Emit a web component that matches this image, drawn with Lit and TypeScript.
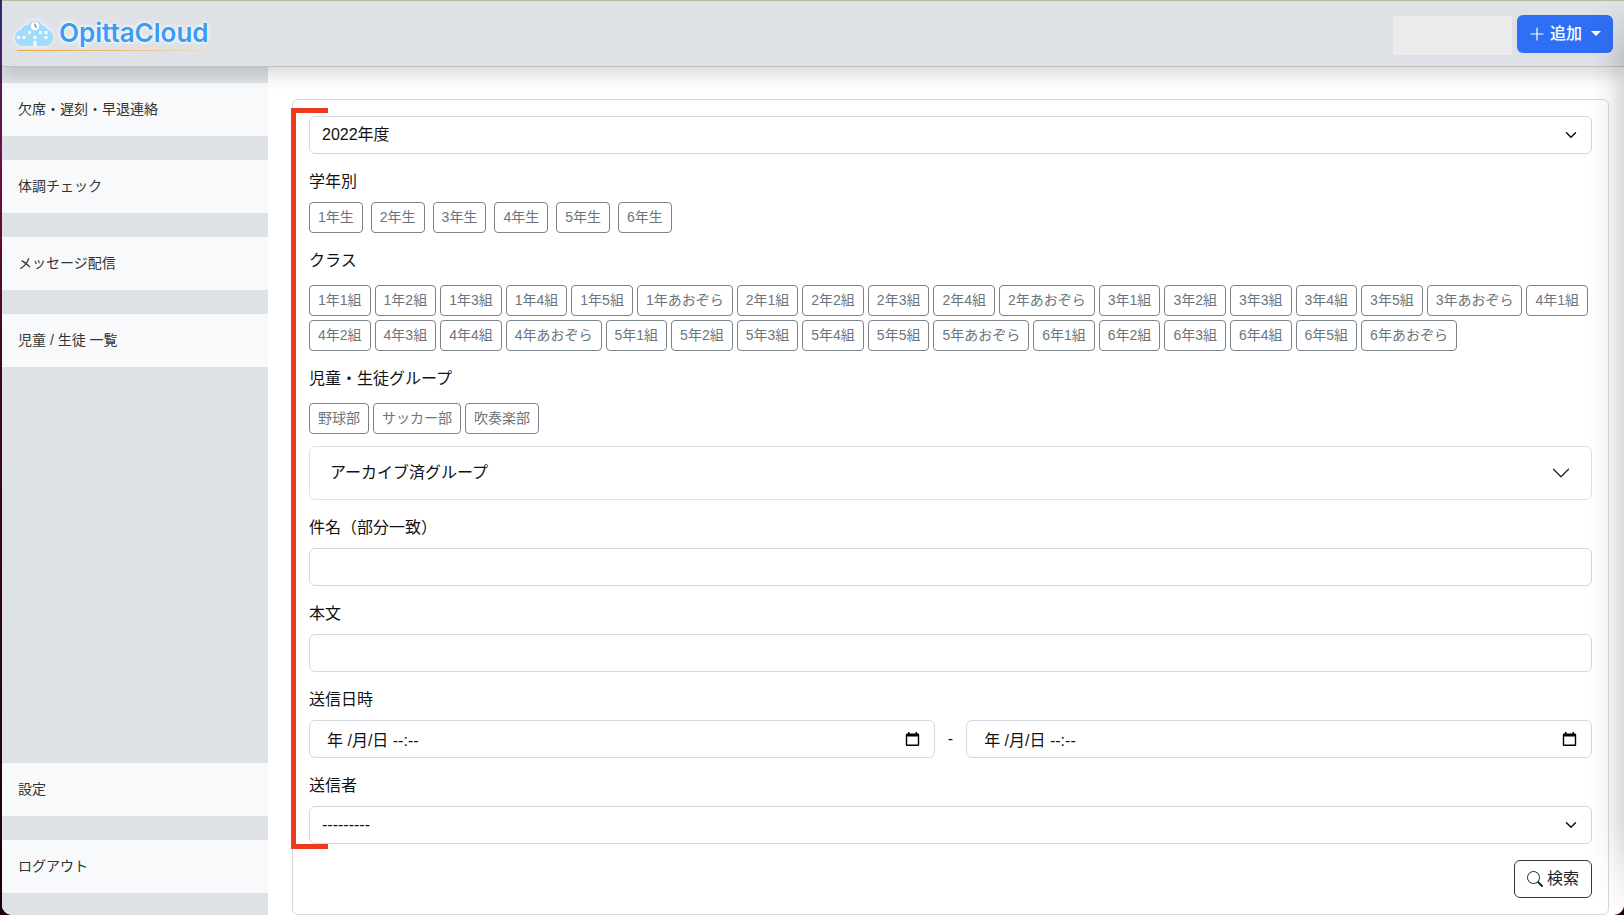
import { LitElement, html, css, svg } from "lit";
import { customElement, property, state } from "lit/decorators.js";
import { classMap } from "lit/directives/class-map.js";

const MENU_TOP = ["欠席・遅刻・早退連絡", "体調チェック", "メッセージ配信", "児童 / 生徒 一覧"];
const MENU_BOTTOM = ["設定", "ログアウト"];

const GRADES = [1, 2, 3, 4, 5, 6].map((n) => `${n}年生`);
const CLASS_COUNTS = [5, 4, 5, 4, 5, 5];
const CLASSES = CLASS_COUNTS.flatMap((count, i) => [
  ...Array.from({ length: count }, (_, k) => `${i + 1}年${k + 1}組`),
  `${i + 1}年あおぞら`,
]);
const GROUPS = ["野球部", "サッカー部", "吹奏楽部"];

const chevron = svg`<path d="m2 5 6 6 6-6" fill="none" stroke="currentColor" stroke-width="2" stroke-linecap="round" stroke-linejoin="round"/>`;

@customElement("brand-logo")
class BrandLogo extends LitElement {
  static styles = css`
    :host {
      display: block;
    }
    .logo {
      display: flex;
      align-items: center;
      gap: 5px;
      height: 34px;
      color: #3a9cf5;
      font: 600 26px/34px Inter, sans-serif;
      text-decoration: none;
      text-shadow: 0 0 3px #fff, 0 0 5px #fff;
    }
    .cloud {
      width: 40px;
      height: 28px;
      filter: drop-shadow(0 0 2px #fff);
    }
    .line {
      height: 1px;
      margin-left: 3px;
      background: linear-gradient(90deg, #f0a43c, #f0b566 45%, #ecdcc4);
    }
  `;
  render() {
    return html`
      <a class="logo" href="#">
        <svg class="cloud" viewBox="0 0 40 28" aria-hidden="true">
          <path
            d="M9 27a8.500 8.500 0 0 1-1.500-16.800A7 7 0 0 1 14 6a8 8 0 0 1 14 0 7 7 0 0 1 5 4.200A8.600 8.600 0 0 1 31.500 27z"
            fill="#a0dcfb"
          />
          <circle cx="21" cy="7" r="4.200" fill="#fff" />
          <path d="M21 4.500V7.300l1.800 1" fill="none" stroke="#555" stroke-width="1" />
          <g fill="#fff">
            <rect x="3" y="17" width="3" height="3" rx="1" />
            <rect x="8.500" y="17" width="3" height="3" rx="1" />
            <rect x="14" y="12" width="3" height="3" rx="1" />
            <rect x="19.500" y="17" width="3" height="3" rx="1" />
            <rect x="25" y="12" width="3" height="3" rx="1" />
            <rect x="30.500" y="12" width="3" height="3" rx="1" />
            <rect x="30.500" y="17" width="3" height="3" rx="1" />
            <rect x="19.500" y="22" width="3" height="5" />
          </g>
        </svg>
        OpittaCloud
      </a>
      <div class="line"></div>
    `;
  }
}

@customElement("chip-group")
class ChipGroup extends LitElement {
  @property() label = "";
  @property({ attribute: false }) items: string[] = [];
  @property({ type: Boolean }) roomy = false;
  @state() private selected = new Set<string>();

  static styles = css`
    :host {
      display: block;
    }
    .group {
      display: flex;
      flex-direction: column;
      gap: 12px;
    }
    .group.roomy {
      gap: 8px;
    }
    .title {
      line-height: 24px;
    }
    .chips {
      display: flex;
      flex-wrap: wrap;
      gap: 4px;
    }
    .roomy .chips {
      gap: 8px;
    }
    .chip {
      padding: 4px 8px;
      border: 1px solid #7b838a;
      border-radius: 4px;
      background: transparent;
      color: #6c757d;
      font: inherit;
      font-size: 14px;
      line-height: 21px;
      cursor: pointer;
    }
    .chip.on {
      background: #6c757d;
      color: #fff;
    }
  `;

  private toggle(item: string) {
    const next = new Set(this.selected);
    if (!next.delete(item)) next.add(item);
    this.selected = next;
  }

  render() {
    return html`
      <div class=${classMap({ group: true, roomy: this.roomy })} role="group" aria-labelledby="title">
        <div class="title" id="title">${this.label}</div>
        <div class="chips">
          ${this.items.map(
            (item) => html`<button
              type="button"
              class=${classMap({ chip: true, on: this.selected.has(item) })}
              aria-pressed=${this.selected.has(item)}
              @click=${() => this.toggle(item)}
            >${item}</button>`
          )}
        </div>
      </div>
    `;
  }
}

@customElement("app-root")
class AppRoot extends LitElement {
  static styles = css`
    :host {
      display: block;
      color: #111;
      font: 16px/24px "Liberation Sans", "Noto Sans CJK JP", sans-serif;
    }
    *,
    *::before,
    *::after {
      box-sizing: border-box;
    }
    .desktop {
      padding: 1px 0 0 2px;
      background: linear-gradient(#2b2a6c, #6d0f45 160px, #3c0618 380px, #1c0207);
    }
    .window {
      position: relative;
      display: flex;
      flex-direction: column;
      min-height: calc(100vh - 1px);
      overflow: hidden;
      border-radius: 0 0 10px 10px;
      background: #fff;
      box-shadow: 0 -1px 0 #afbea0;
    }
    .edge {
      position: absolute;
      inset: 0 0 0 auto;
      width: 36px;
      background: linear-gradient(90deg, transparent, rgba(0, 0, 0, 0.03) 50%, rgba(0, 0, 0, 0.14));
      mask-image: linear-gradient(transparent, #000 60px, #000 calc(100% - 90px), transparent);
      pointer-events: none;
      z-index: 3;
    }
    .header {
      position: relative;
      z-index: 2;
      display: flex;
      align-items: center;
      justify-content: space-between;
      height: 66px;
      padding: 0 11px 0 12px;
      border-bottom: 1px solid #bfc3c7;
      background: #dee2e6;
      box-shadow: 0 8px 16px rgba(0, 0, 0, 0.15);
    }
    .actions {
      display: flex;
      align-items: center;
      gap: 5px;
    }
    .account {
      width: 119px;
      height: 39px;
      margin-top: 4px;
      background: #ebebeb;
    }
    .add {
      display: flex;
      align-items: center;
      gap: 5px;
      height: 38px;
      padding: 0 12px;
      border: 0;
      border-radius: 6px;
      background: #2f6ff5;
      color: #fff;
      font: inherit;
      font-weight: 500;
      cursor: pointer;
    }
    .caret {
      margin-left: 4px;
      border: 5px solid transparent;
      border-top-color: #fff;
      border-bottom: 0;
    }
    .body {
      flex: 1;
      display: grid;
      grid-template-columns: 266px minmax(0, 1fr);
    }
    .sidebar {
      display: flex;
      flex-direction: column;
      gap: 24px;
      padding: 16px 0 22px;
      background: #dee2e6;
    }
    .item {
      padding: 16px;
      background: #f8f9fb;
      color: #333;
      font-size: 14px;
      line-height: 21px;
      text-decoration: none;
    }
    .first-bottom {
      margin-top: auto;
    }
    .main {
      padding: 32px 15px 0 24px;
    }
    .card {
      position: relative;
      display: flex;
      flex-direction: column;
      gap: 16px;
      padding: 16px;
      border: 1px solid #d5d8db;
      border-radius: 6px;
    }
    .bracket {
      position: absolute;
      top: 8px;
      bottom: 65px;
      left: -2px;
      width: 37px;
      border: 5px solid #ee3a1f;
      border-right: 0;
      pointer-events: none;
      z-index: 1;
    }
    .groups,
    .field {
      display: flex;
      flex-direction: column;
    }
    .groups {
      gap: 12px;
    }
    .field {
      gap: 8px;
    }
    .control {
      width: 100%;
      min-width: 0;
      height: 38px;
      padding: 0 12px;
      border: 1px solid #d3d8de;
      border-radius: 6px;
      background: transparent;
      color: inherit;
      font: inherit;
      appearance: none;
    }
    .stack {
      display: grid;
      flex: 1;
      align-items: center;
    }
    .stack > * {
      grid-area: 1 / 1;
    }
    .arrow {
      justify-self: end;
      margin-right: 13px;
      pointer-events: none;
    }
    .range {
      display: flex;
      align-items: center;
      gap: 13px;
    }
    .date {
      padding-left: 17px;
    }
    .picker {
      display: flex;
      justify-self: end;
      margin-right: 15px;
      padding: 0;
      border: 0;
      background: none;
      color: #000;
      cursor: pointer;
    }
    .accordion {
      display: flex;
      align-items: center;
      justify-content: space-between;
      height: 54px;
      padding: 0 20px;
      border: 1px solid #dee2e6;
      border-radius: 6px;
      background: transparent;
      color: inherit;
      font: inherit;
      cursor: pointer;
    }
    .search {
      display: flex;
      align-items: center;
      align-self: flex-end;
      gap: 4px;
      height: 38px;
      padding: 0 12px;
      border: 1px solid #33373b;
      border-radius: 6px;
      background: transparent;
      color: #212529;
      font: inherit;
      cursor: pointer;
    }
  `;

  private select(id: string, option: string, label?: string) {
    return html`<div class="stack">
      <select class="control" id=${id} aria-label=${label ?? "送信者"}>
        <option>${option}</option>
      </select>
      <svg class="arrow" width="16" height="12" viewBox="0 0 16 16" aria-hidden="true">${chevron}</svg>
    </div>`;
  }

  private textField(id: string, label: string) {
    return html`<div class="field">
      <label for=${id}>${label}</label>
      <input class="control" id=${id} type="text" />
    </div>`;
  }

  private dateInput(id: string, label: string) {
    return html`<div class="stack">
      <input class="control date" id=${id} type="text" aria-label=${label} value="年 /月/日 --:--" />
      <button class="picker" type="button" aria-label="カレンダー">
        <svg width="15" height="15" viewBox="0 0 15 15" aria-hidden="true">
          <path d="M3 0h1.500v1.500h6V0H12v1.500h1A1.200 1.200 0 0 1 14.200 2.700v10.100A1.200 1.200 0 0 1 13 14H2A1.200 1.200 0 0 1 .8 12.800V2.700A1.200 1.200 0 0 1 2 1.500h1zM2.200 4.500v8.100h10.600V4.500z" fill="currentColor" fill-rule="evenodd" />
        </svg>
      </button>
    </div>`;
  }

  render() {
    return html`
      <div class="desktop">
        <div class="window">
          <header class="header">
            <brand-logo></brand-logo>
            <div class="actions">
              <div class="account"></div>
              <button class="add" type="button">
                <svg width="16" height="16" viewBox="0 0 16 16" aria-hidden="true">
                  <path d="M8 2v12M2 8h12" stroke="#fff" stroke-width="1.200" stroke-linecap="round" />
                </svg>
                追加
                <span class="caret"></span>
              </button>
            </div>
          </header>
          <div class="body">
            <nav class="sidebar">
              ${MENU_TOP.map((t) => html`<a class="item" href="#">${t}</a>`)}
              ${MENU_BOTTOM.map(
                (t, i) => html`<a class=${classMap({ item: true, "first-bottom": i === 0 })} href="#">${t}</a>`
              )}
            </nav>
            <main class="main">
              <form class="card" @submit=${(e: Event) => e.preventDefault()}>
                <div class="bracket"></div>
                ${this.select("year", "2022年度", "年度")}
                <chip-group label="学年別" .items=${GRADES} roomy></chip-group>
                <chip-group label="クラス" .items=${CLASSES}></chip-group>
                <div class="groups">
                  <chip-group label="児童・生徒グループ" .items=${GROUPS}></chip-group>
                  <button class="accordion" type="button" aria-expanded="false">
                    アーカイブ済グループ
                    <svg width="20" height="20" viewBox="0 0 16 16" aria-hidden="true">
                      <path d="m2 5 6 6 6-6" fill="none" stroke="#212529" stroke-linecap="round" stroke-linejoin="round" />
                    </svg>
                  </button>
                </div>
                ${this.textField("subject", "件名（部分一致）")} ${this.textField("text", "本文")}
                <div class="field">
                  <label for="from">送信日時</label>
                  <div class="range">
                    ${this.dateInput("from", "送信日時 開始")}
                    <span>-</span>
                    ${this.dateInput("to", "送信日時 終了")}
                  </div>
                </div>
                <div class="field">
                  <label for="sender">送信者</label>
                  ${this.select("sender", "---------")}
                </div>
                <button class="search" type="submit">
                  <svg width="16" height="16" viewBox="0 0 16 16" aria-hidden="true">
                    <circle cx="6.500" cy="6.500" r="6" fill="none" stroke="currentColor" />
                    <path d="m11.300 11.300 3.700 3.700" stroke="currentColor" stroke-width="2" stroke-linecap="round" />
                  </svg>
                  検索
                </button>
              </form>
            </main>
          </div>
          <div class="edge"></div>
        </div>
      </div>
    `;
  }
}
